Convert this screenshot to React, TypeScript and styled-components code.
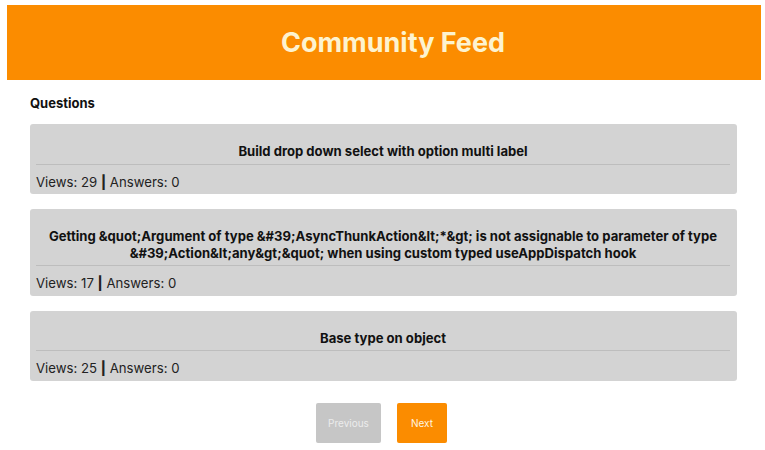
import React from 'react';
import styled, {createGlobalStyle} from 'styled-components';

const GlobalStyle = createGlobalStyle`
  html, body {
    margin: 0;
    padding: 0;
    background: #fff;
  }
  body {
    font-family: Inter, "Liberation Sans", Arial, sans-serif;
    color: #111;
  }
`

const Page = styled.div`
  padding: 5px 4px 0 7px;
`

const Header = styled.header`
  background: #fb8c00;
  height: 75px;
  display: flex;
  align-items: center;
  justify-content: center;

  & h1 {
    margin: 0 0 0 18px;
    font-size: 27px;
    font-weight: 700;
    color: #fdf3cf;
  }
`

const Main = styled.main`
  padding: 0 24px 0 23px;
`

const SectionTitle = styled.h3`
  margin: 16px 0 13px;
  font-size: 13px;
  line-height: 15px;
  font-weight: 700;
`

const List = styled.div`
  display: flex;
  flex-direction: column;
  gap: 15px;
`

const Card = styled.div`
  background: #d3d3d3;
  border-radius: 3px;
  padding: 19px 7px 4.5px 6px;
`

const CardTitle = styled.div`
  font-size: 13.1px;
  line-height: 16.5px;
  font-weight: 700;
  text-align: center;
  padding-bottom: 4px;
  border-bottom: 1px solid #bdbdbd;
`

const CardStats = styled.div`
  font-size: 13.2px;
  line-height: 16px;
  padding-top: 9px;
  color: #222;

  & b {
    font-weight: 800;
  }
`

const Pager = styled.div`
  display: flex;
  justify-content: center;
  gap: 16px;
  margin-top: 22px;
  padding-right: 4px;
`

const PageButton = styled.button<{$active?: boolean}>`
  height: 40px;
  padding: 0 ${p => p.$active ? 14 : 12}px;
  border: none;
  border-radius: 2px;
  font-family: inherit;
  font-size: 10px;
  background: ${p => p.$active ? '#fb8c00' : '#c6c6c6'};
  color: ${p => p.$active ? '#fff6e0' : '#ececec'};
  cursor: ${p => p.$active ? 'pointer' : 'default'};
`

const questions = [
  {
    title: 'Build drop down select with option multi label',
    views: 29,
    answers: 0,
  },
  {
    title: 'Getting &quot;Argument of type &#39;AsyncThunkAction&lt;*&gt; is not assignable to parameter of type &#39;Action&lt;any&gt;&quot; when using custom typed useAppDispatch hook',
    views: 17,
    answers: 0,
  },
  {
    title: 'Base type on object',
    views: 25,
    answers: 0,
  },
]

export default function App() {
  return <Page>
    <GlobalStyle/>
    <Header>
      <h1>Community Feed</h1>
    </Header>

    <Main>
      <SectionTitle>Questions</SectionTitle>

      <List>
        {questions.map((q, i) =>
          <Card key={i}>
            <CardTitle>{q.title}</CardTitle>
            <CardStats>Views: {q.views} <b>|</b> Answers: {q.answers}</CardStats>
          </Card>
        )}
      </List>

      <Pager>
        <PageButton disabled>Previous</PageButton>
        <PageButton $active>Next</PageButton>
      </Pager>
    </Main>
  </Page>
}
